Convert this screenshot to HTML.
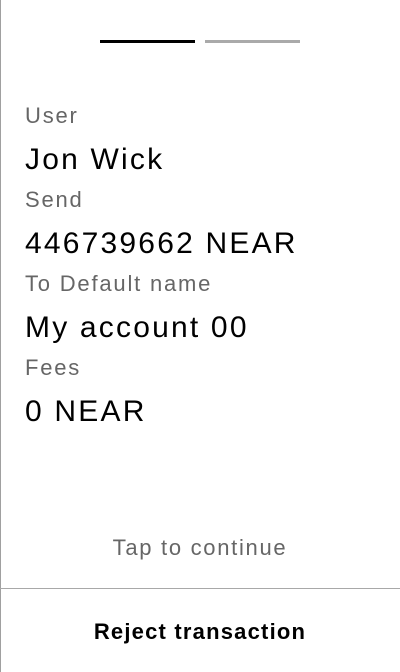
<!DOCTYPE html>
<html><head><style>
html,body{margin:0;padding:0;}
body{width:400px;height:672px;position:relative;background:#fff;font-family:"Liberation Sans",sans-serif;overflow:hidden;}
.lb{position:absolute;left:0;top:0;width:1px;height:672px;background:#a0a0a0;}
.bar{position:absolute;top:40px;height:3px;width:95px;}
.t{position:absolute;left:25px;white-space:nowrap;line-height:1;}
.l{font-size:22px;color:#666;letter-spacing:1.8px;}
.v{font-size:30px;color:#000;letter-spacing:2.2px;}
</style></head><body>
<div class="lb"></div>
<div class="bar" style="left:100px;background:#000"></div>
<div class="bar" style="left:205px;background:#aaa"></div>
<div class="t l" style="top:105px">User</div>
<div class="t v" style="top:145px">Jon Wick</div>
<div class="t l" style="top:189px">Send</div>
<div class="t v" style="top:229px">446739662 NEAR</div>
<div class="t l" style="top:273px">To Default name</div>
<div class="t v" style="top:313px">My account 00</div>
<div class="t l" style="top:357px">Fees</div>
<div class="t v" style="top:397px">0 NEAR</div>
<div style="position:absolute;left:0;width:400px;top:537px;line-height:1;text-align:center;font-size:22px;letter-spacing:1.7px;color:#666">Tap to continue</div>
<div style="position:absolute;left:0;top:588px;width:400px;height:1px;background:#a8a8a8"></div>
<div style="position:absolute;left:0;width:400px;top:621px;line-height:1;text-align:center;font-size:22px;letter-spacing:1.2px;font-weight:bold;color:#000">Reject transaction</div>
</body></html>
